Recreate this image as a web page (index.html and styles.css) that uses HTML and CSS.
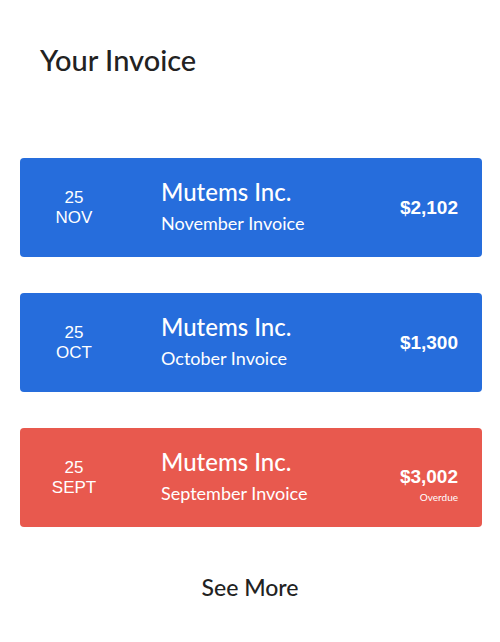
FILE: index.html
```html
<!DOCTYPE html>
<html lang="en">
<head>
<meta charset="utf-8">
<title>Your Invoice</title>
<link rel="stylesheet" href="styles.css">
</head>
<body>
<main class="page">
  <h1 class="title">Your Invoice</h1>
  <section class="list">
    <article class="card card-blue">
      <div class="date"><span>25</span><span>NOV</span></div>
      <div class="info">
        <div class="company">Mutems Inc.</div>
        <div class="desc">November Invoice</div>
      </div>
      <div class="amount"><div class="value">$2,102</div></div>
    </article>
    <article class="card card-blue">
      <div class="date"><span>25</span><span>OCT</span></div>
      <div class="info">
        <div class="company">Mutems Inc.</div>
        <div class="desc">October Invoice</div>
      </div>
      <div class="amount"><div class="value">$1,300</div></div>
    </article>
    <article class="card card-red">
      <div class="date"><span>25</span><span>SEPT</span></div>
      <div class="info">
        <div class="company">Mutems Inc.</div>
        <div class="desc">September Invoice</div>
      </div>
      <div class="amount amount-overdue"><div class="value">$3,002</div><div class="status">Overdue</div></div>
    </article>
  </section>
  <div class="more">See More</div>
</main>
</body>
</html>
```

FILE: styles.css
```css
html, body {
  margin: 0;
  padding: 0;
  background: #ffffff;
}
.page {
  font-family: "Lato", "Liberation Sans", sans-serif;
  color: #222222;
  display: flex;
  flex-direction: column;
}
.title {
  margin: 0;
  padding: 42px 0 0 40px;
  font-size: 29px;
  font-weight: 500;
  line-height: 36px;
  color: #222222;
}
.list {
  display: flex;
  flex-direction: column;
  gap: 36px;
  margin: 80px 18px 0 20px;
}
.card {
  height: 99px;
  border-radius: 4px;
  color: #ffffff;
  display: grid;
  grid-template-columns: 108px 1fr auto;
  column-gap: 33px;
  align-items: center;
  padding-right: 24px;
}
.card-blue { background: #266ddc; }
.card-red { background: #e8594e; }
.date {
  display: flex;
  flex-direction: column;
  align-items: center;
  font-family: "Liberation Sans", Arial, sans-serif;
  font-size: 17px;
  line-height: 20px;
}
.info {
  display: flex;
  flex-direction: column;
  gap: 6px;
  padding-bottom: 4px;
}
.company {
  font-size: 24px;
  line-height: 28px;
  font-weight: 500;
}
.desc {
  font-size: 18px;
  line-height: 22px;
}
.amount {
  display: flex;
  flex-direction: column;
  align-items: flex-end;
}
.amount-overdue {
  padding-top: 14px;
}
.value {
  font-family: "Liberation Sans", Arial, sans-serif;
  font-weight: bold;
  font-size: 19px;
  line-height: 22px;
}
.status {
  font-size: 10px;
  line-height: 14px;
  margin-top: 2px;
}
.more {
  margin-top: 46px;
  text-align: center;
  font-size: 23px;
  font-weight: 500;
  line-height: 28px;
  color: #222222;
}
```
